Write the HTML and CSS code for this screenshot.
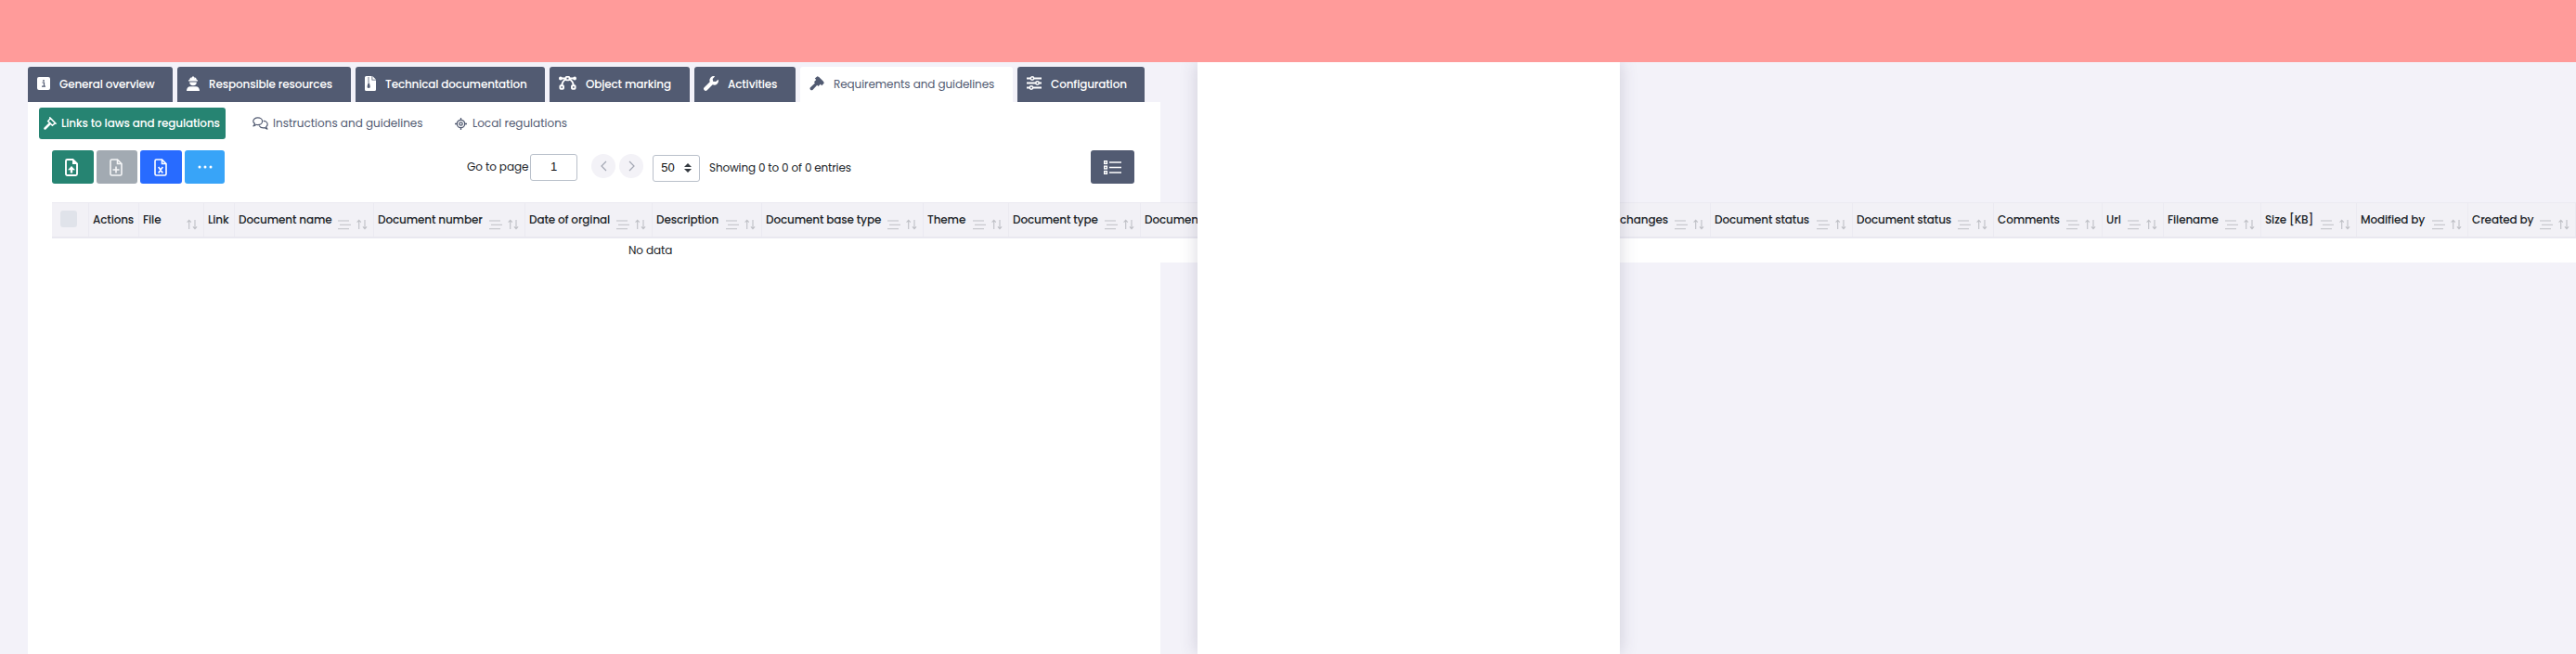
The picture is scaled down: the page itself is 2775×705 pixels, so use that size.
FILE: index.html
```html
<!DOCTYPE html>
<html lang="en">
<head>
<meta charset="utf-8">
<title>Requirements and guidelines</title>
<link rel="stylesheet" href="styles.css">
</head>
<body>
<svg class="defs" width="0" height="0" aria-hidden="true">
  <symbol id="lines" viewBox="0 0 14 11"><path d="M0 1h12M2 5.3h12M0 9.7h12" fill="none" stroke="currentColor" stroke-width="1"/></symbol>
  <symbol id="sort" viewBox="0 0 12 12"><path d="M2.7 11V1.5M.6 3.6 2.7 1.3l2.1 2.3M9 1v9.5M6.900 8.4 9 10.7l2.100-2.3" fill="none" stroke="currentColor" stroke-width="1.100"/></symbol>
</svg>
<header class="banner"></header>
<main class="page">
  <nav class="tabs">
    <a class="tab t1"><svg width="14" height="14" viewBox="0 0 14 14"><rect width="14" height="14" rx="2" fill="#fff"/><path d="M5.500 6h2v4M5 10.200h4" stroke="#525b72" stroke-width="1.200" fill="none"/><circle cx="7" cy="3.900" r=".9" fill="#525b72"/></svg><span>General overview</span></a>
    <a class="tab t2"><svg width="14" height="16" viewBox="0 0 14 16"><path d="M2 4.200h1A4 4 0 0 1 5.500 1L6 3V.6h2V3l.5-2A4 4 0 0 1 11 4.200h1v1.300H2zM3.200 6.500h7.600a3.800 3.800 0 0 1-7.600 0zM0 16c0-3 1.600-4.800 4-4.800h6c2.400 0 4 1.800 4 4.800z" fill="#fff"/></svg><span>Responsible resources</span></a>
    <a class="tab t3"><svg width="12" height="16" viewBox="0 0 12 16"><path d="M1.500 0H7.500V4.500H12V14.500A1.500 1.500 0 0 1 10.500 16h-9A1.500 1.500 0 0 1 0 14.500v-13A1.500 1.500 0 0 1 1.500 0zM8.300 0 12 3.700H8.300z" fill="#fff"/><path d="M4 1.500v6" stroke="#525b72" stroke-dasharray="1 1" stroke-width="1.600"/><path d="M3.500 7.500h1.400l.8 3.500a1.600 1.600 0 1 1-3.100 0z" fill="#525b72"/></svg><span>Technical documentation</span></a>
    <a class="tab t4"><svg width="19" height="15" viewBox="0 0 19 15"><path d="M2 2.500h15M7.500 3.500C4.800 4.700 3.600 7 3.300 10M11.500 3.500c2.700 1.200 3.900 3.500 4.200 6.500" stroke="#fff" stroke-width="1.900" fill="none"/><circle cx="1.900" cy="2.500" r="1.900" fill="#fff"/><circle cx="17.100" cy="2.500" r="1.900" fill="#fff"/><rect x="7.600" y=".9" width="3.800" height="3.400" rx=".7" fill="#525b72" stroke="#fff" stroke-width="1.800"/><rect x="1.400" y="10.200" width="3.600" height="3.600" rx=".7" fill="#525b72" stroke="#fff" stroke-width="1.900"/><rect x="14" y="10.200" width="3.600" height="3.600" rx=".7" fill="#525b72" stroke="#fff" stroke-width="1.900"/></svg><span>Object marking</span></a>
    <a class="tab t5"><svg width="16" height="16" viewBox="0 0 16 16"><path d="M15.700 3.700a4.500 4.500 0 0 1-6 5.600L3.700 15.200a2 2 0 0 1-3-3L6.700 6.200A4.500 4.500 0 0 1 12.200.3L9.700 2.900l.4 2.800 2.900.4z" fill="#fff"/></svg><span>Activities</span></a>
    <a class="tab t6 active"><svg width="16" height="16" viewBox="0 0 16 16"><path d="M8.500.2 10.200 1 15 5.800l.8 1.700-2.500 2.700-1.500-1.500-2.300 2.300-1.300-1.200-4.800 5.300a2 2 0 0 1-2.700-2.700L6 7.600 4.900 6.400l2.300-2.300L5.800 2.600z" fill="#525b72"/></svg><span>Requirements and guidelines</span></a>
    <a class="tab t7"><svg width="16" height="15" viewBox="0 0 16 15"><path d="M0 2.500h16M0 7.500h16M0 12.500h16" stroke="#fff" stroke-width="2.200"/><g fill="#525b72" stroke="#fff" stroke-width="1.500"><circle cx="6" cy="2.500" r="1.700"/><circle cx="11.500" cy="7.500" r="1.700"/><circle cx="5" cy="12.500" r="1.700"/></g></svg><span>Configuration</span></a>
  </nav>
  <section class="card">
    <nav class="subtabs">
      <a class="subtab on"><svg width="14" height="14" viewBox="0 0 14 14"><path d="M6.800.9 13.100 7.200M7.400 1.500 4.700 4.600l4.700 4.700 3.100-2.700" stroke="#fff" stroke-width="1.500" stroke-linecap="round" fill="none"/><path d="M6.500 7.500 1.500 12.500" stroke="#fff" stroke-width="2.500" stroke-linecap="round"/></svg><span>Links to laws and regulations</span></a>
      <a class="subtab s2"><svg width="17" height="14" viewBox="0 0 17 14"><g fill="none" stroke="#525b72" stroke-width="1.200" stroke-linejoin="round"><path d="M1 9.800c.9-.8 1.400-1.700 1.500-2.500C1.500 6.600.8 5.700.8 4.700.8 2.500 3 .8 5.700.8s4.900 1.700 4.900 3.900-2.200 3.900-4.900 3.900c-.6 0-1.200-.1-1.700-.3-.8.800-1.800 1.300-3 1.500z"/><path d="M11.700 4.300c2.500.1 4.500 1.700 4.500 3.700 0 1-.6 1.900-1.500 2.600.1.900.6 1.700 1.300 2.500-1.200-.2-2.100-.7-2.800-1.500-.5.200-1 .3-1.600.3-2 0-3.700-1-4.500-2.400"/></g></svg><span>Instructions and guidelines</span></a>
      <a class="subtab s3"><svg width="13" height="13" viewBox="0 0 13 13"><g fill="none" stroke="#525b72" stroke-width="1.300"><circle cx="6.500" cy="6.500" r="4.200"/><circle cx="6.500" cy="6.500" r="1.700"/><path d="M6.500 0v2.200M6.500 10.800V13M0 6.500h2.200M10.800 6.500H13"/></g></svg><span>Local regulations</span></a>
    </nav>
    <div class="toolbar">
      <div class="actions">
        <button class="btn green"><svg width="14" height="19" viewBox="0 0 14 19"><path d="M2.500 1H8.500L13 5.500V16.500A1.500 1.500 0 0 1 11.500 18h-9A1.500 1.500 0 0 1 1 16.500v-14A1.500 1.500 0 0 1 2.500 1z" fill="none" stroke="#fff" stroke-width="1.900"/><path d="M8 1v5h5zM7 8l4 4.300H8.200V15.500H5.800V12.300H3z" fill="#fff"/></svg></button>
        <button class="btn gray"><svg width="14" height="19" viewBox="0 0 14 19"><path d="M2.500 1H8.500L13 5.500V16.500A1.500 1.500 0 0 1 11.500 18h-9A1.500 1.500 0 0 1 1 16.500v-14A1.500 1.500 0 0 1 2.500 1zM8.500 1v4.500H13M7 15.500v-7M3.500 12h7" fill="none" stroke="#f5f6f7" stroke-width="1.600"/></svg></button>
        <button class="btn blue"><svg width="14" height="19" viewBox="0 0 14 19"><path d="M2.500 1H8.500L13 5.500V16.500A1.500 1.500 0 0 1 11.500 18h-9A1.500 1.500 0 0 1 1 16.500v-14A1.500 1.500 0 0 1 2.500 1zM8.500 1v4.500H13M4.700 9l4.600 6.500M9.300 9l-4.600 6.500" fill="none" stroke="#fff" stroke-width="1.600"/></svg></button>
        <button class="btn sky"><svg width="16" height="4" viewBox="0 0 16 4"><g fill="#fff"><circle cx="2" cy="2" r="1.500"/><circle cx="8" cy="2" r="1.500"/><circle cx="14" cy="2" r="1.500"/></g></svg></button>
      </div>
      <div class="pager">
        <span class="goto">Go to page</span>
        <span class="field page-no">1</span>
        <span class="round"><svg width="7" height="12" viewBox="0 0 7 12"><path d="M6 1 1 6l5 5" fill="none" stroke="#a3a7b3" stroke-width="1.200"/></svg></span>
        <span class="round next"><svg width="7" height="12" viewBox="0 0 7 12"><path d="m1 1 5 5-5 5" fill="none" stroke="#a3a7b3" stroke-width="1.200"/></svg></span>
        <span class="field size"><span>50</span><svg width="8" height="10" viewBox="0 0 8 10"><path d="M4 0 8 4H0zM4 10 0 6h8z" fill="#343a40"/></svg></span>
        <span class="showing">Showing 0 to 0 of 0 entries</span>
      </div>
      <button class="btn slate"><svg width="19" height="15" viewBox="0 0 19 15"><path d="M6 2h13M6 7.500h13M6 13h13" stroke="#fff" stroke-width="1.300"/><g fill="none" stroke="#fff" stroke-width="1.400"><rect x=".7" y=".7" width="2.700" height="2.700"/><rect x=".7" y="6.200" width="2.700" height="2.700"/><rect x=".7" y="11.600" width="2.700" height="2.700"/></g></svg></button>
    </div>
    <div class="table">
      <div class="thead">
        <div class="th check"><i></i></div>
        <div class="th"><span>Actions</span></div>
        <div class="th"><span>File</span><svg class="so"><use href="#sort"/></svg></div>
        <div class="th"><span>Link</span></div>
        <div class="th"><span>Document name</span><svg class="li"><use href="#lines"/></svg><svg class="so"><use href="#sort"/></svg></div>
        <div class="th"><span>Document number</span><svg class="li"><use href="#lines"/></svg><svg class="so"><use href="#sort"/></svg></div>
        <div class="th"><span>Date of orginal</span><svg class="li"><use href="#lines"/></svg><svg class="so"><use href="#sort"/></svg></div>
        <div class="th"><span>Description</span><svg class="li"><use href="#lines"/></svg><svg class="so"><use href="#sort"/></svg></div>
        <div class="th"><span>Document base type</span><svg class="li"><use href="#lines"/></svg><svg class="so"><use href="#sort"/></svg></div>
        <div class="th"><span>Theme</span><svg class="li"><use href="#lines"/></svg><svg class="so"><use href="#sort"/></svg></div>
        <div class="th"><span>Document type</span><svg class="li"><use href="#lines"/></svg><svg class="so"><use href="#sort"/></svg></div>
        <div class="th"><span>Document</span></div>
        <div class="th end"><span>changes</span><svg class="li"><use href="#lines"/></svg><svg class="so"><use href="#sort"/></svg></div>
        <div class="th"><span>Document status</span><svg class="li"><use href="#lines"/></svg><svg class="so"><use href="#sort"/></svg></div>
        <div class="th"><span>Document status</span><svg class="li"><use href="#lines"/></svg><svg class="so"><use href="#sort"/></svg></div>
        <div class="th"><span>Comments</span><svg class="li"><use href="#lines"/></svg><svg class="so"><use href="#sort"/></svg></div>
        <div class="th"><span>Url</span><svg class="li"><use href="#lines"/></svg><svg class="so"><use href="#sort"/></svg></div>
        <div class="th"><span>Filename</span><svg class="li"><use href="#lines"/></svg><svg class="so"><use href="#sort"/></svg></div>
        <div class="th"><span>Size [KB]</span><svg class="li"><use href="#lines"/></svg><svg class="so"><use href="#sort"/></svg></div>
        <div class="th"><span>Modified by</span><svg class="li"><use href="#lines"/></svg><svg class="so"><use href="#sort"/></svg></div>
        <div class="th"><span>Created by</span><svg class="li"><use href="#lines"/></svg><svg class="so"><use href="#sort"/></svg></div>
      </div>
      <div class="empty"><span>No data</span></div>
    </div>
  </section>
</main>
<aside class="drawer"></aside>
</body>
</html>
```

FILE: styles.css
```css
* { box-sizing: border-box; }
body {
  margin: 0;
  height: 705px;
  overflow: hidden;
  background: #f3f2f9;
  color: #212529;
  font: 12px/18px Poppins, Inter, sans-serif;
}
.defs { display: block; height: 0; }
svg { flex: none; }
span { white-space: nowrap; }
.banner { height: 67px; background: #ff9b9a; }
.page { padding: 5px 0 0 30px; }
.tabs { display: flex; gap: 5px; height: 38px; }
.tab {
  display: flex;
  align-items: center;
  height: 38px;
  padding-left: 10px;
  border-radius: 3px 3px 0 0;
  background: #525b72;
  color: #fff;
  font-weight: 500;
  letter-spacing: -.14px;
}
.tab svg { margin-bottom: 3px; }
.tab span { margin-left: 10px; }
.t1 { width: 156px; }
.t2 { width: 187px; }
.t3 { width: 204px; }
.t4 { width: 151px; }
.t5 { width: 109px; }
.t6 { width: 229px; }
.t7 { width: 137px; }
.tab.active { background: #fff; color: #525b72; font-weight: 400; letter-spacing: -.08px; }
.card { width: 1220px; height: 595px; padding: 6px 26px 0 12px; background: #fff; }
.subtabs { display: flex; height: 34px; }
.subtab { display: flex; align-items: center; gap: 5px; color: #525b72; }
.subtab.on {
  width: 201px;
  padding-left: 5px;
  border-radius: 3px;
  background: #268472;
  color: #fff;
  font-weight: 500;
  letter-spacing: -.12px;
}
.s2 { margin-left: 29px; width: 218px; }
.s3 { gap: 6px; }
.toolbar { display: flex; margin: 12px 0 0 14px; height: 36px; width: 1166px; }
.actions { display: flex; gap: 3px; width: 447px; }
.btn {
  display: flex;
  align-items: center;
  justify-content: center;
  width: 44.700px;
  height: 36px;
  padding: 0 2px 0 0;
  border: 0;
  border-radius: 3px;
}
.green { background: #268472; }
.gray { background: #a2aab2; }
.blue { background: #286bff; }
.sky { background: #38a4f8; width: 43px; padding: 0; }
.slate { background: #525b72; width: 47px; margin-left: auto; padding: 0; }
.pager { display: flex; align-items: center; }
.goto { width: 68px; letter-spacing: -.1px; }
.field {
  display: flex;
  align-items: center;
  justify-content: center;
  height: 29px;
  width: 51px;
  border: 1px solid #b9c0ca;
  border-radius: 3px;
  color: #111;
  font: 13px/18px "Liberation Sans", Arial, sans-serif;
}
.round {
  display: flex;
  align-items: center;
  justify-content: center;
  width: 26px;
  height: 26px;
  margin: 0 0 2px 15px;
  border-radius: 50%;
  background: #f3f2f7;
}
.round.next { margin-left: 4px; }
.size { margin: 2px 0 0 10px; gap: 10px; }
.showing { margin: 2px 0 0 10px; letter-spacing: -.16px; }
.table { width: 2719px; margin: 20px 0 0 14px; }
.thead {
  display: grid;
  grid-template-columns: 40px 54px 70px 33px 150px 163px 137px 118px 174px 92px 142px 412px 202px 153px 152px 117px 66px 105px 103px 120px 116px;
  height: 39px;
  border-top: 1px solid #ebeaf1;
  border-bottom: 2px solid #e9e8f0;
  background: #f2f1f6;
}
.th {
  display: flex;
  align-items: center;
  padding: 0 6px 0 4px;
  border-right: 1px solid #ebeaf1;
  font-weight: 500;
  letter-spacing: -.13px;
}
.th span { margin-right: auto; }
.th.end span { margin: 0 7px 0 auto; }
.th svg { color: #bfc0c6; margin-top: 10px; }
.li { width: 14px; height: 11px; margin-right: 6px; }
.so { width: 12px; height: 12px; }
.th.check { padding-left: 9px; }
.check i { width: 18px; height: 18px; margin-bottom: 2px; border-radius: 3px; background: #e0e3ea; }
.empty { height: 26px; padding-left: 621px; background: #fff; letter-spacing: -.1px; }
.empty span { display: block; padding-top: 4px; }
.drawer {
  position: absolute;
  top: 67px;
  left: 1290px;
  width: 455px;
  height: 638px;
  background: #fff;
  box-shadow: 0 0 18px rgba(60, 55, 90, .2);
  clip-path: inset(0 -30px);
}
```
